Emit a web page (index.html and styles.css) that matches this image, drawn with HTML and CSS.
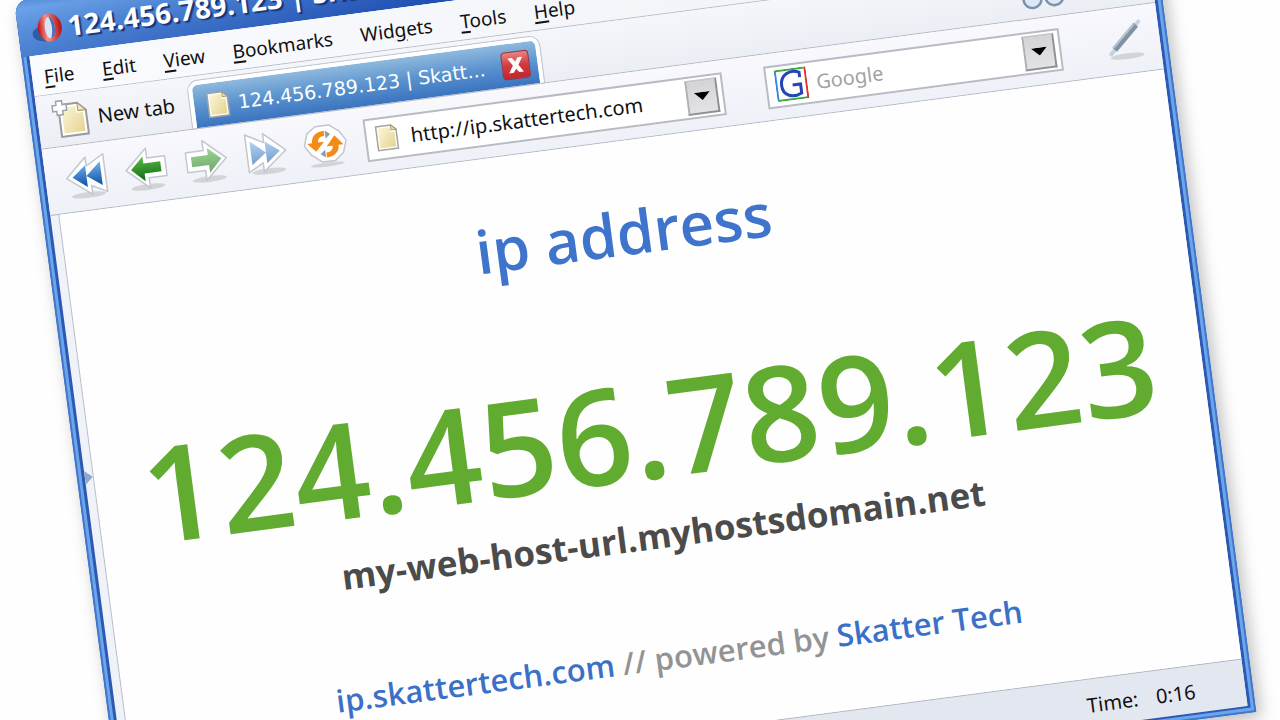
FILE: index.html
```html
<!DOCTYPE html>
<html lang="en">
<head>
    <meta charset="UTF-8">
    <meta name="viewport" content="width=device-width, initial-scale=1.0">
    <title>124.456.789.123 | Skatter Tech</title>
    <link rel="stylesheet" href="styles.css">
</head>
<body>

<!-- shared icon parts -->
<svg class="defs" width="0" height="0" aria-hidden="true">
    <defs>
        <linearGradient id="paper" x1="0" y1="0" x2="1" y2="1">
            <stop offset="0" stop-color="#fbf6d8"/>
            <stop offset="1" stop-color="#e6d391"/>
        </linearGradient>
        <linearGradient id="blue" x1="0" y1="0" x2="0" y2="1">
            <stop offset="0" stop-color="#6fb2ea"/>
            <stop offset="1" stop-color="#0d4ea6"/>
        </linearGradient>
        <linearGradient id="green" x1="0" y1="0" x2="0" y2="1">
            <stop offset="0" stop-color="#5cba45"/>
            <stop offset="1" stop-color="#0b6a14"/>
        </linearGradient>
        <linearGradient id="red" x1="0" y1="0" x2="1" y2="0">
            <stop offset="0" stop-color="#b80f14"/>
            <stop offset=".35" stop-color="#f59184"/>
            <stop offset="1" stop-color="#b50b10"/>
        </linearGradient>
    </defs>
    <symbol id="page" viewBox="0 0 24 26">
        <path d="M2 1h15l5 5v19H2z" fill="#fff" stroke="#a3a39f" stroke-width="1.5"/>
        <path d="M4 3h12v5h4v15H4z" fill="url(#paper)"/>
        <path d="M17 1l5 5h-5z" fill="#eee0ad" stroke="#a59b78"/>
    </symbol>
</svg>

<div class="window">
    <header class="titlebar">
        <svg class="logo" viewBox="0 0 32 30">
            <ellipse cx="13" cy="20" rx="13" ry="8" fill="#1d3f80" opacity=".6"/>
            <ellipse cx="18" cy="15" rx="12" ry="14" fill="url(#red)"/>
            <ellipse cx="18" cy="15" rx="5" ry="11" fill="#d8e5f8"/>
            <path d="M18 4c4 1 5 6 5 11s-1 10-5 11c3-7 3-15 0-22z" fill="#436fb9"/>
        </svg>
        <span>124.456.789.123 | Skatter Tech</span>
    </header>

    <nav class="menubar">
        <button><u>F</u>ile</button>
        <button><u>E</u>dit</button>
        <button><u>V</u>iew</button>
        <button><u>B</u>ookmarks</button>
        <button>Wid<u>g</u>ets</button>
        <button><u>T</u>ools</button>
        <button><u>H</u>elp</button>
    </nav>

    <div class="tabbar">
        <button class="new-tab">
            <svg viewBox="0 0 38 42">
                <path d="M8 6h19l8 8v24H8z" fill="#fff" stroke="#9a9a9a" stroke-width="2"/>
                <path d="M11 9h14v7h7v19H11z" fill="url(#paper)"/>
                <path d="M27 6l8 8h-8z" fill="#f3e6b8" stroke="#a59b78"/>
                <path d="M6 2h6v4h4v6h-4v4H6v-4H2V6h4z" fill="#fff" stroke="#9ca2aa" stroke-width="1.5"/>
            </svg>
            New tab
        </button>
        <div class="tab">
            <svg class="page-icon"><use href="#page"/></svg>
            <span>124.456.789.123 | Skatt...</span>
            <button class="close" aria-label="Close tab">
                <svg viewBox="0 0 28 28"><path d="M6 6h5l3 4 3-4h5l-5 8 5 8h-5l-3-4-3 4H6l5-8z" fill="#fff"/></svg>
            </button>
        </div>
        <svg class="glasses" viewBox="0 0 44 22">
            <circle cx="11" cy="11" r="9" fill="#dce8f6" stroke="#7e91a8" stroke-width="2.5"/>
            <circle cx="33" cy="11" r="9" fill="#dce8f6" stroke="#7e91a8" stroke-width="2.5"/>
        </svg>
    </div>

    <div class="toolbar">
        <div class="nav-buttons">
            <button aria-label="Rewind">
                <svg viewBox="0 0 44 44">
                    <ellipse cx="21" cy="40" rx="17" ry="3" class="ground"/>
                    <path d="M22 2v9L40 1v38L25 31v9L1 21z" class="edge"/>
                    <path d="M21 10v22L7 21zM36 8v24L21 21z" fill="url(#blue)"/>
                </svg>
            </button>
            <button aria-label="Back">
                <svg viewBox="0 0 44 44">
                    <ellipse cx="21" cy="40" rx="17" ry="3" class="ground"/>
                    <path d="M23 1v10h18v20H23v10L1 21z" class="edge"/>
                    <path d="M19 9v7h17v10H19v8L6 21z" fill="url(#green)"/>
                </svg>
            </button>
            <button aria-label="Forward">
                <svg viewBox="0 0 44 44">
                    <ellipse cx="23" cy="40" rx="17" ry="3" class="ground"/>
                    <path d="M20 1v10H2v20h18v10l22-20z" class="edge"/>
                    <path d="M24 9v7H7v10h17v8l13-13z" fill="url(#green)" opacity=".6"/>
                </svg>
            </button>
            <button aria-label="Fast forward">
                <svg viewBox="0 0 44 44">
                    <ellipse cx="23" cy="40" rx="17" ry="3" class="ground"/>
                    <path d="M21 2v9L3 1v38l15-8v9l24-19z" class="edge"/>
                    <path d="M22 10v22l14-11zM7 8v24l15-11z" fill="url(#blue)" opacity=".55"/>
                </svg>
            </button>
            <button aria-label="Reload">
                <svg viewBox="0 0 44 44">
                    <ellipse cx="22" cy="41" rx="17" ry="2" class="ground"/>
                    <path d="M14 2h14l6 5 3 2 6 10-4 12-9 7H17l-7-6-3-2-6-10 4-12z" class="edge"/>
                    <path d="M22 7C13 7 9 12 9 18H4l8 9 9-9h-6c0-4 3-6 7-6z" fill="#f58a14"/>
                    <path d="M22 34c9 0 13-5 13-11h5l-8-10-9 10h6c0 4-3 6-7 6z" fill="#f58a14"/>
                    <path d="M23 7v8l5-4zM21 26v8l-5-4z" fill="#8d9aa9"/>
                </svg>
            </button>
        </div>

        <div class="field address">
            <svg class="page-icon"><use href="#page"/></svg>
            <input type="text" aria-label="Address" value="http://ip.skattertech.com">
            <button class="drop" aria-label="Show addresses"><svg viewBox="0 0 16 8"><path d="M0 0h16L8 8z"/></svg></button>
        </div>

        <div class="field search">
            <svg class="g-icon" viewBox="0 0 32 32" fill="none">
                <path d="M1 31V1" stroke="#3b82e0" stroke-width="2"/>
                <path d="M0 1h30M1 31h30" stroke="#37ab3a" stroke-width="2"/>
                <path d="M31 0v32" stroke="#dd3427" stroke-width="2"/>
                <path d="M25 10V5c-9-4-19 0-19 11s10 14 19 10v-9h-8" stroke="#2444b8" stroke-width="3"/>
            </svg>
            <input type="text" aria-label="Search" placeholder="Google">
            <button class="drop" aria-label="Choose search engine"><svg viewBox="0 0 16 8"><path d="M0 0h16L8 8z"/></svg></button>
        </div>

        <button class="pen" aria-label="Customize">
            <svg viewBox="0 0 40 44">
                <ellipse cx="21" cy="38" rx="17" ry="3" class="ground"/>
                <path d="M5 34L36 5" stroke="#c3d3e2" stroke-width="4" stroke-linecap="round"/>
                <path d="M9 30L33 8" stroke="#8193a2" stroke-width="6"/>
                <path d="M8 28L31 7" stroke="#b9c7d2" stroke-width="2"/>
            </svg>
        </button>
    </div>

    <div class="content">
        <button class="panel-toggle" aria-label="Show panel"></button>
        <main>
            <h1>ip address</h1>
            <p class="ip">124.456.789.123</p>
            <p class="host">my-web-host-url.myhostsdomain.net</p>
            <p class="credit"><a href="#">ip.skattertech.com</a> // powered by <a href="#">Skatter Tech</a></p>
        </main>
    </div>

    <footer class="statusbar">
        <span>Time:</span>
        <span>0:16</span>
    </footer>
</div>

</body>
</html>
```
FILE: styles.css
```css
* {
    box-sizing: border-box;
}
body {
    margin: 0;
    height: 100vh;
    overflow: hidden;
    background: #fefefe;
    font-family: "Noto Sans", Tahoma, sans-serif;
    font-size: 20px;
    color: #111;
}
button {
    padding: 0;
    border: none;
    background: none;
    font: inherit;
    color: inherit;
}
svg {
    display: block;
    flex: none;
}
.defs {
    position: absolute;
}

/* the whole browser window is tilted */
.window {
    width: 89vw;
    margin: 1px 0 0 14px;
    padding: 0 8px 7px;
    border-radius: 14px 14px 0 0;
    background: #eff2f9;
    box-shadow: inset 0 0 0 2px #4475c8, inset 0 0 0 5px #69a6ec, inset 0 0 0 8px #2d59b3, 4px 6px 16px rgba(0, 0, 0, 0.25);
    transform: rotate(-7.5deg);
    transform-origin: 0 0;
}
.titlebar {
    display: flex;
    align-items: center;
    gap: 4px;
    height: 57px;
    margin: 0 -8px;
    padding: 4px 14px 0;
    border-radius: 14px 14px 0 0;
    background: linear-gradient(90deg, rgba(110, 165, 235, 0.5), rgba(8, 50, 160, 0.5) 45%), linear-gradient(#3f78cc, #6ba0e4 15%, #3f76cb 55%, #2356b4);
    font-family: "Open Sans", sans-serif;
    font-size: 28px;
    font-weight: 700;
    color: #fff;
    text-shadow: 2px 2px 1px #16357c;
    white-space: nowrap;
    overflow: hidden;
}
.logo {
    width: 32px;
    height: 30px;
}
.menubar {
    display: flex;
    align-items: center;
    gap: 28px;
    height: 41px;
    padding: 4px 12px 0;
    border-bottom: 1px solid #b9bcc4;
    background: linear-gradient(90deg, #fafbfe, #eef0f6);
    font-size: 19px;
}
.menubar u {
    text-underline-offset: 3px;
    text-decoration-thickness: 2px;
}

.tabbar {
    display: flex;
    align-items: flex-end;
    height: 53px;
    padding-left: 14px;
    border-bottom: 1px solid #b4b7c0;
    background: linear-gradient(#f5f6fb, #ebeef4);
}
.new-tab {
    display: flex;
    align-items: center;
    gap: 8px;
    width: 139px;
    height: 52px;
}
.new-tab svg {
    width: 38px;
    height: 42px;
}
.tab {
    display: flex;
    align-items: center;
    width: 354px;
    height: 47px;
    padding: 0 8px 0 12px;
    border: 4px solid #fff;
    border-bottom: none;
    border-radius: 10px 10px 0 0;
    background: linear-gradient(#8fb9dd, #5b93cf 50%, #3a74bf);
    box-shadow: 0 0 0 1px #bfc3cb;
    font-family: "DejaVu Sans", sans-serif;
    font-size: 19px;
    color: #fff;
    white-space: nowrap;
}
.tab span {
    flex: 1;
}
.page-icon {
    width: 24px;
    height: 28px;
    margin-right: 8px;
}
.close {
    width: 28px;
    height: 28px;
    border: 1px solid #a72c3a;
    border-radius: 4px;
    background: linear-gradient(#e98480, #d33a3e 50%, #c3262e);
}
.glasses {
    width: 44px;
    height: 22px;
    margin: 0 88px 8px auto;
}

.toolbar {
    display: flex;
    align-items: center;
    height: 67px;
    padding: 0 15px 0 20px;
    border-bottom: 1px solid #b4b8c2;
    background: linear-gradient(#f8f8fd, #eff1f8);
}
.nav-buttons {
    display: flex;
    gap: 16px;
    margin-right: 18px;
}
.nav-buttons svg {
    width: 44px;
    height: 44px;
}
.edge {
    fill: #fff;
    stroke: #c3c6cc;
    stroke-width: 1.5;
    stroke-linejoin: round;
}
.ground {
    fill: #777;
    opacity: 0.25;
}
.field {
    display: flex;
    align-items: center;
    min-width: 0;
    height: 43px;
    padding: 0 4px 0 8px;
    border: 2px solid #b8bbc3;
    background: #fff;
}
.field input {
    flex: 1;
    min-width: 0;
    padding: 0;
    border: none;
    outline: none;
    background: none;
    font: inherit;
    color: #111;
}
.field input::placeholder {
    color: #a2a2a2;
}
.address {
    flex: 360;
    margin-right: 42px;
}
.address .page-icon {
    margin-right: 12px;
}
.search {
    flex: 294;
    margin-right: 44px;
}
.g-icon {
    width: 32px;
    height: 32px;
    margin-right: 9px;
}
.drop {
    display: flex;
    align-items: center;
    justify-content: center;
    width: 32px;
    height: 35px;
    border: 2px solid;
    border-color: #c6c6c8 #909094 #909094 #b0b0b4;
    background: linear-gradient(#d4d4d8, #e3e3e6);
}
.drop svg {
    width: 16px;
    height: 8px;
}
.pen svg {
    width: 40px;
    height: 44px;
}

.content {
    display: flex;
}
.panel-toggle {
    align-self: center;
    width: 8px;
    height: 14px;
    margin-bottom: 66px;
    background: #91a9c8;
    clip-path: polygon(0 0, 100% 50%, 0 100%);
}
main {
    flex: 1;
    padding: 61px 0 56px;
    border-left: 1px solid #b9bdc7;
    background: #fefefe;
    font-family: "Open Sans", sans-serif;
    font-weight: 600;
    text-align: center;
    white-space: nowrap;
}
h1 {
    margin: 0;
    font-size: 60px;
    line-height: 60px;
    font-weight: 600;
    color: #3f74cc;
}
.ip {
    margin: 102px 0 0;
    font-size: 133px;
    line-height: 130px;
    color: #62ab31;
}
.host {
    margin: 23px 0 0;
    font-size: 35px;
    line-height: 40px;
    font-weight: 700;
    color: #4b4b4b;
}
.credit {
    margin: 82px 0 0;
    font-size: 31px;
    line-height: 40px;
    color: #939393;
}
.credit a {
    color: #3b70c8;
    text-decoration: none;
}

.statusbar {
    display: flex;
    align-items: center;
    justify-content: flex-end;
    gap: 18px;
    height: 48px;
    padding: 4px 50px 0 0;
    border-top: 1px solid #b0b4be;
    background: #e3e7ef;
}
```
